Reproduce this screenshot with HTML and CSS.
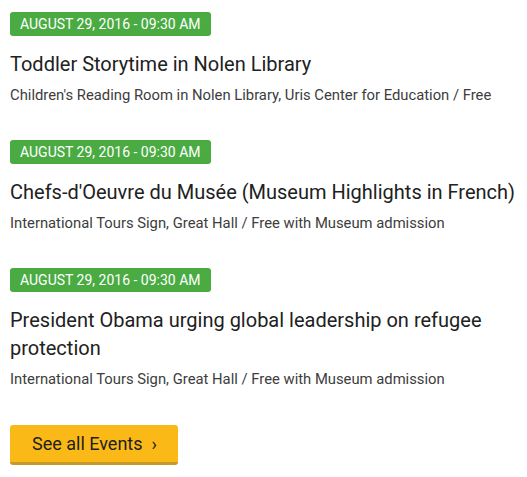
FILE: index.html
```html
<!DOCTYPE html>
<html>
<head>
<meta charset="utf-8">
<link rel="stylesheet" href="styles.css">
</head>
<body>
<div class="events">
  <div class="event">
    <span class="date">August 29, 2016 - 09:30 AM</span>
    <h3 class="title">Toddler Storytime in Nolen Library</h3>
    <p class="place">Children's Reading Room in Nolen Library, Uris Center for Education / Free</p>
  </div>
  <div class="event">
    <span class="date">August 29, 2016 - 09:30 AM</span>
    <h3 class="title">Chefs-d'Oeuvre du Musée (Museum Highlights in French)</h3>
    <p class="place">International Tours Sign, Great Hall / Free with Museum admission</p>
  </div>
  <div class="event">
    <span class="date">August 29, 2016 - 09:30 AM</span>
    <h3 class="title">President Obama urging global leadership on refugee protection</h3>
    <p class="place">International Tours Sign, Great Hall / Free with Museum admission</p>
  </div>
  <a class="more" href="#">See all Events <span class="chev">›</span></a>
</div>
</body>
</html>
```
FILE: styles.css
```css
html, body {
  margin: 0;
  padding: 0;
  background: #fff;
}
body {
  font-family: Roboto, "Liberation Sans", sans-serif;
  color: #212121;
}
.events {
  padding: 12px 10px 0 10px;
  display: flex;
  flex-direction: column;
  align-items: flex-start;
}
.event {
  display: flex;
  flex-direction: column;
  align-items: flex-start;
  margin-bottom: 35px;
}
.event:last-of-type {
  margin-bottom: 36px;
}
.date {
  display: inline-block;
  background: #4aab43;
  color: #fff;
  text-transform: uppercase;
  font-size: 14px;
  font-weight: 400;
  line-height: 24px;
  height: 24px;
  padding: 0 10px;
  border-radius: 3px;
}
.title {
  margin: 14px 0 0 0;
  font-size: 20px;
  font-weight: 400;
  line-height: 28px;
  color: #212121;
}
.place {
  margin: 7px 0 0 0;
  font-size: 14.8px;
  line-height: 20px;
  color: #3d3d3d;
}
.more {
  display: inline-flex;
  align-items: center;
  height: 37px;
  padding: 0 21px 0 22px;
  background: #fbb917;
  border-bottom: 3px solid #c79b2a;
  border-radius: 3px;
  color: #1d1d1d;
  font-size: 18px;
  text-decoration: none;
}
.chev {
  margin-left: 9px;
  font-size: 18px;
}
```
